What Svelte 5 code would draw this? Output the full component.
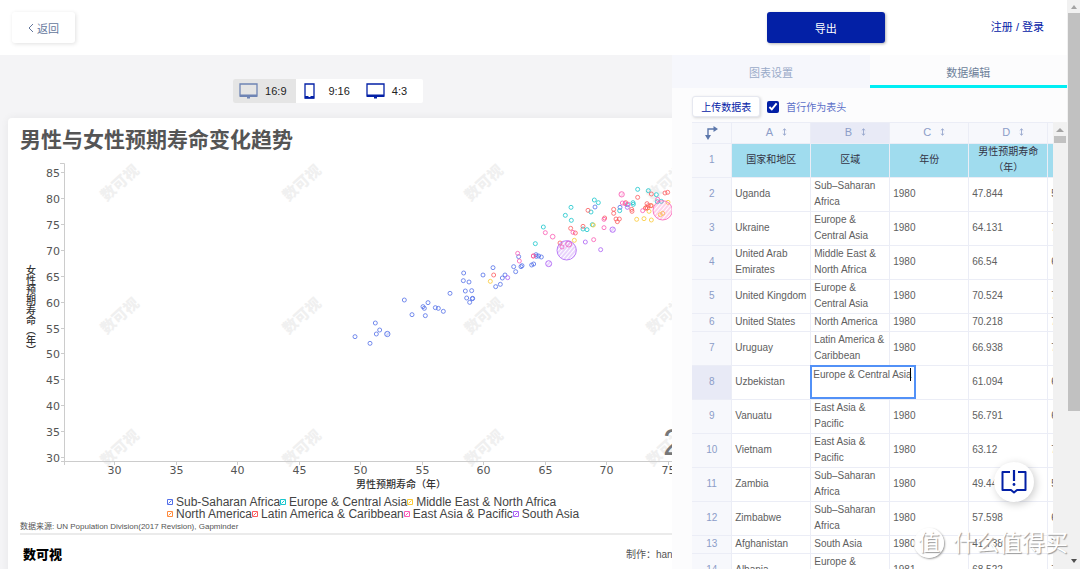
<script lang="ts">
	const ratios = [
		{ label: '16:9', icon: 'screen' },
		{ label: '9:16', icon: 'phone' },
		{ label: '4:3', icon: 'screen' }
	];
	let ratio = $state('16:9');
	let tab = $state('data');
	let firstRowHeader = $state(true);
	let editing = $state('Europe & Central Asia');

	// [x, y, radius], in thirds of a pixel
	const series = [
		{
			name: 'Sub-Saharan Africa',
			color: '#5470e8',
			points: [
				[45, 500], [90, 520], [106, 459], [119, 480], [109, 492], [142, 492, 8], [193, 390],
				[216, 434], [264, 398], [249, 410], [253, 415], [256, 437], [286, 413], [295, 415],
				[310, 424], [330, 370], [371, 309], [370, 332], [387, 336], [376, 363], [395, 362],
				[380, 384], [397, 386], [398, 385], [389, 397], [429, 315], [459, 293], [495, 315],
				[487, 324], [481, 343], [467, 350], [521, 290], [527, 305], [543, 290], [546, 287],
				[575, 285], [581, 282], [536, 260], [588, 254], [589, 259], [596, 258], [604, 261],
				[765, 111], [840, 112]
			]
		},
		{
			name: 'Europe & Central Asia',
			color: '#19c5cc',
			points: [
				[586, 221], [610, 171], [693, 112], [676, 136], [694, 151], [763, 90], [775, 98],
				[753, 126], [729, 177], [741, 179], [757, 164], [893, 58], [879, 98], [880, 103],
				[862, 104], [839, 122], [925, 62], [949, 74], [964, 94], [952, 95]
			]
		},
		{
			name: 'Middle East & North Africa',
			color: '#fbc935',
			points: [
				[451, 334], [703, 211], [760, 165], [890, 148], [912, 146], [934, 150], [927, 124],
				[968, 130], [961, 134], [984, 97]
			]
		},
		{ name: 'North America', color: '#ff8b3d', points: [[917, 114], [934, 107]] },
		{
			name: 'Latin America & Caribbean',
			color: '#fb5c5f',
			points: [
				[461, 315], [660, 219], [692, 175], [706, 189], [729, 169], [744, 121], [794, 144],
				[821, 118], [821, 130], [828, 147], [838, 147], [832, 155], [893, 82], [857, 98],
				[875, 118], [876, 124], [921, 101], [925, 107], [932, 107], [917, 114], [922, 114],
				[934, 72], [983, 67], [975, 69], [580, 258]
			]
		},
		{
			name: 'East Asia & Pacific',
			color: '#fa5cb4',
			points: [
				[533, 250], [538, 273], [616, 188], [638, 200, 7], [580, 258, 6], [666, 231],
				[686, 222, 9], [699, 187], [792, 148], [792, 173], [761, 209], [845, 73, 8],
				[847, 99], [855, 101], [865, 103], [908, 122], [953, 88], [968, 121, 29]
			]
		},
		{
			name: 'South Asia',
			color: '#ad62f5',
			points: [
				[503, 323], [626, 281, 9], [736, 216], [782, 239], [818, 179, 8], [862, 112],
				[680, 241, 29]
			]
		}
	];

	const yTicks = [85, 80, 75, 70, 65, 60, 55, 50, 45, 40, 35, 30];
	const xTicks = [30, 35, 40, 45, 50, 55, 60, 65, 70, 75];
	const xPos = (v: number) => Math.round(106 + (v - 30) * 12.3) + 0.5;
	const yPos = (v: number) => Math.round(302 - (v - 30) * 5.18) + 0.5;
	const marks = [112, 294, 476, 658].flatMap((x) => [28, 161, 293].map((y) => ({ x, y })));

	const columns = ['A', 'B', 'C', 'D', 'E'];
	const headings = ['国家和地区', '区域', '年份', '男性预期寿命（年）', '女性'];
	const rows = [
		['Uganda', 'Sub–Saharan Africa', '1980', '47.844', '54.2'],
		['Ukraine', 'Europe & Central Asia', '1980', '64.131', '74.1'],
		['United Arab Emirates', 'Middle East & North Africa', '1980', '66.54', '69.8'],
		['United Kingdom', 'Europe & Central Asia', '1980', '70.524', '76.6'],
		['United States', 'North America', '1980', '70.218', '77.5'],
		['Uruguay', 'Latin America & Caribbean', '1980', '66.938', '73.6'],
		['Uzbekistan', 'Europe & Central Asia', '1980', '61.094', '67.7'],
		['Vanuatu', 'East Asia & Pacific', '1980', '56.791', '60.1'],
		['Vietnam', 'East Asia & Pacific', '1980', '63.12', '72.1'],
		['Zambia', 'Sub–Saharan Africa', '1980', '49.447', '52.7'],
		['Zimbabwe', 'Sub–Saharan Africa', '1980', '57.598', '61.6'],
		['Afghanistan', 'South Asia', '1980', '41.738', '74.4'],
		['Albania', 'Europe & Central Asia', '1981', '68.522', '73.5']
	];
</script>

<div class="page">
	<div class="app">
		<header>
			<button class="back">
				<svg width="6" height="10" viewBox="0 0 6 10"><path d="M5 1 1 5l4 4" fill="none" stroke="currentColor" /></svg>
				返回
			</button>
			<button class="export">导出</button>
			<a class="login" href="#login">注册 / 登录</a>
		</header>

		<main>
			<section class="stage">
				<div class="ratios">
					{#each ratios as r (r.label)}
						<button class:active={ratio === r.label} onclick={() => (ratio = r.label)}>
							<svg width="19" height="16" viewBox="0 0 19 16">
								{#if r.icon === 'screen'}
									<path d="M1 1h17v12H1z" fill="none" stroke="currentColor" stroke-width="1.3" />
									<path d="M1 11.5h17V14H1zM8 14h3v1.6H8z" fill="currentColor" />
								{:else}
									<path d="M3 1h9v14H3z" fill="none" stroke="currentColor" stroke-width="1.3" />
									<path d="M3 13h3.5v1h2v-1H12v2.5H3z" fill="currentColor" />
								{/if}
							</svg>
							<span>{r.label}</span>
						</button>
					{/each}
				</div>

				<article class="card">
					<h1>男性与女性预期寿命变化趋势</h1>
					<svg class="plot" width="840" height="341" viewBox="0 0 840 341">
						<defs>
							{#each series as s, i (s.name)}
								<pattern id="hatch{i}" width="3" height="3" patternUnits="userSpaceOnUse" patternTransform="rotate(40)">
									<path d="M1 0v3" stroke={s.color} stroke-width="0.8" opacity="0.7" />
								</pattern>
							{/each}
						</defs>
						{#each marks as m}
							<text class="mark" transform="translate({m.x} {m.y}) rotate(-42)" text-anchor="middle" dy="5">数可视</text>
						{/each}
						<text class="year" x="655" y="300">2</text>
						<path class="axis" d="M52 8.5h4.5V310M53 306.5H840" />
						{#each yTicks as v}
							<path class="axis" d="M53 {yPos(v)}h3" />
							<text class="tick" x="52" y={yPos(v) + 4} text-anchor="end">{v}</text>
						{/each}
						{#each xTicks as v}
							<path class="axis" d="M{xPos(v)} 307v3" />
							<text class="tick" x={xPos(v)} y="319" text-anchor="middle">{v}</text>
						{/each}
						<text class="name vertical" x="22" y="110">女性预期寿命（年）</text>
						<text class="name" x="393" y="333" text-anchor="middle">男性预期寿命（年）</text>
						{#each series as s, i (s.name)}
							{#each s.points as [x, y, r = 6]}
								<circle
									cx={332 + x / 3}
									cy={15 + y / 3}
									r={r / 3}
									stroke={s.color}
									fill={r > 7 ? `url(#hatch${i})` : 'none'}
								/>
							{/each}
						{/each}
					</svg>

					<div class="legend">
						{#each [series.slice(0, 3), series.slice(3)] as line}
							<div class="legend-row">
								{#each line as s (s.name)}
									<span class="legend-item">
										<svg width="6" height="6" viewBox="0 0 6 6">
											<path d="M.5.5h5v5h-5zM1.5 4.5l3-3" fill="none" stroke={s.color} />
										</svg>
										{s.name}
									</span>
								{/each}
							</div>
						{/each}
					</div>
					<p class="source">数据来源: UN Population Division(2017 Revision), Gapminder</p>
					<footer>
						<span class="logo">数可视</span>
						<span class="author">制作：hanmeimei</span>
					</footer>
				</article>
			</section>

			<section class="panel">
				<nav>
					<button class:active={tab === 'chart'} onclick={() => (tab = 'chart')}>图表设置</button>
					<button class:active={tab === 'data'} onclick={() => (tab = 'data')}>数据编辑</button>
				</nav>
				<div class="tools">
					<button class="upload">上传数据表</button>
					<label>
						<input type="checkbox" bind:checked={firstRowHeader} />
						首行作为表头
					</label>
				</div>
				<div class="sheet">
					<div class="sheet-view">
						<table>
							<thead>
								<tr>
									<th class="corner">
										<svg width="14" height="14" viewBox="0 0 14 14">
											<path d="M3 9V3h6" fill="none" stroke="currentColor" stroke-width="1.4" />
											<path d="M8.5 0 13 3 8.5 6zM0 9h6l-3 5z" fill="currentColor" />
										</svg>
									</th>
									{#each columns as c (c)}
										<th class="column" class:selected={c === 'B'}>
											<span class="letter">{c}</span>
											<svg width="5" height="8" viewBox="0 0 5 8">
												<path d="M2.5 1v6M.8 2.4 2.5.8l1.7 1.6M.8 5.6l1.7 1.6 1.7-1.6" fill="none" stroke="currentColor" stroke-width="0.8" />
											</svg>
										</th>
									{/each}
								</tr>
							</thead>
							<tbody>
								<tr class="headings">
									<th>1</th>
									{#each headings as h}
										<td>{h}</td>
									{/each}
								</tr>
								{#each rows as row, i}
									<tr class:editing={i === 6}>
										<th class:selected={i === 6}>{i + 2}</th>
										{#each row as cell, j}
											<td>
												{#if i === 6 && j === 1}
													<div class="editor">
														<textarea aria-label="B8" bind:value={editing}></textarea>
														<span class="caret"></span>
													</div>
												{:else}
													{cell}
												{/if}
											</td>
										{/each}
									</tr>
								{/each}
							</tbody>
						</table>
					</div>
					<div class="bar inner">
						<svg width="8" height="5" viewBox="0 0 8 5"><path d="M0 5 4 1l4 4z" fill="#a3a3a3" /></svg>
						<div class="thumb"></div>
					</div>
				</div>
			</section>
		</main>
	</div>

	<div class="bar outer">
		<svg width="8" height="5" viewBox="0 0 8 5"><path d="M1 5 4 1l3 4z" fill="#a3a3a3" /></svg>
		<div class="thumb"></div>
		<svg class="down" width="8" height="5" viewBox="0 0 8 5"><path d="M1 0h6L4 4z" fill="#505050" /></svg>
	</div>

	<button class="help" aria-label="help">
		<svg width="26" height="24" viewBox="0 0 26 24">
			<path d="M9 2H1.5v18H10l3 2.5 3-2.5h8.5V2H17" fill="none" stroke="currentColor" stroke-width="2" stroke-linejoin="round" />
			<path d="M13 0v11" stroke="currentColor" stroke-width="2.2" />
			<circle cx="13" cy="14.5" r="1.4" fill="currentColor" />
		</svg>
	</button>

	<div class="stamp">
		<span class="seal">值</span>
		<span>什么值得买</span>
	</div>
</div>

<style>
	:global(body) {
		overflow: hidden;
	}

	.page {
		position: relative;
		display: flex;
		height: 100vh;
		overflow: hidden;
		background: #fff;
		color: #555;
		font-family: 'Liberation Sans', 'Noto Sans CJK SC', sans-serif;
		font-size: 11px;
	}

	button {
		padding: 0;
		border: 0;
		background: #fff;
		color: inherit;
		font: inherit;
		cursor: pointer;
	}

	.app {
		flex: 1;
		min-width: 0;
		display: flex;
		flex-direction: column;
	}

	header {
		flex: none;
		display: flex;
		align-items: center;
		height: 55px;
		padding: 0 23px 0 12px;
	}

	.back {
		display: flex;
		align-items: center;
		justify-content: center;
		gap: 3px;
		width: 63px;
		height: 31px;
		border-radius: 3px;
		box-shadow: 1px 1px 4px rgba(0, 0, 0, 0.12);
		color: #64779c;
	}

	.export {
		width: 118px;
		height: 31px;
		margin-left: auto;
		border-radius: 3px;
		background: #0320a6;
		box-shadow: 1px 1px 3px rgba(0, 0, 0, 0.3);
		color: #fff;
	}

	.login {
		margin: 0 0 3px 106px;
		color: #0320a6;
		text-decoration: none;
	}

	main {
		flex: 1;
		display: flex;
		min-height: 0;
	}

	.stage {
		flex: 1;
		min-width: 0;
		padding: 24px 24px 0 8px;
		overflow: hidden;
		background: #f4f4f6;
	}

	.ratios {
		display: flex;
		width: 190px;
		height: 24px;
		margin: 0 auto 15px;
		border-radius: 2px;
		overflow: hidden;
		background: #fff;
	}

	.ratios button {
		flex: 1;
		display: flex;
		align-items: center;
		gap: 7px;
		padding-left: 6px;
		background: none;
		color: #0320a6;
	}

	.ratios button.active {
		background: #e5e5e5;
		color: #6e84b4;
	}

	.ratios span {
		color: #222;
	}

	.card {
		width: 840px;
		height: 100%;
		padding-top: 7px;
		border-radius: 4px;
		background: #fff;
		box-shadow: 0 0 8px rgba(0, 0, 0, 0.06);
	}

	h1 {
		margin: 0 0 0 12px;
		color: #555;
		font-size: 21px;
		line-height: 30px;
	}

	.plot {
		display: block;
	}

	.mark {
		fill: #f0f0f0;
		font-size: 15px;
		font-weight: 900;
	}

	.year {
		fill: #777;
		font-size: 36px;
	}

	.axis {
		fill: none;
		stroke: #ccc;
	}

	.tick {
		fill: #555;
		font-family: 'DejaVu Sans', sans-serif;
		font-size: 11px;
	}

	.name {
		fill: #333;
		font-size: 10px;
		font-weight: 500;
	}

	.vertical {
		writing-mode: vertical-rl;
	}

	circle {
		stroke-opacity: 0.8;
	}

	.legend {
		padding-left: 159px;
		color: #444;
		font-size: 12px;
		line-height: 12px;
	}

	.legend-row {
		display: flex;
	}

	.legend-item {
		display: flex;
		align-items: center;
		gap: 3px;
		white-space: nowrap;
	}

	.source {
		margin: 1px 0 0 12px;
		border-bottom: 2px solid #ebebeb;
		font-size: 8px;
		line-height: 12px;
	}

	footer {
		display: flex;
		align-items: center;
		height: 36px;
		padding-left: 15px;
	}

	.logo {
		width: 603px;
		color: #000;
		font-size: 13px;
		font-weight: 900;
	}

	.author {
		font-size: 10px;
	}

	.panel {
		flex: 0 0 37%;
		display: flex;
		flex-direction: column;
		min-width: 0;
		background: #fcfcfd;
	}

	nav {
		flex: none;
		display: flex;
		height: 33px;
	}

	nav button {
		flex: 1;
		background: #f6f7fc;
		color: #9aabc8;
	}

	nav button.active {
		border-top: 3px solid #fcfcfd;
		border-bottom: 3px solid #00eef4;
		background: #fcfcfd;
		color: #6c7f99;
	}

	.tools {
		flex: none;
		display: flex;
		align-items: center;
		gap: 7px;
		padding: 8px 20px 5px;
		font-size: 10px;
	}

	.upload {
		width: 68px;
		height: 21px;
		border: 1px solid #e6e8f0;
		border-radius: 3px;
		box-shadow: 1px 1px 3px rgba(0, 0, 0, 0.15);
		color: #0320a6;
	}

	label {
		display: flex;
		align-items: center;
		gap: 7px;
		color: #5c70c8;
	}

	input {
		width: 12px;
		height: 12px;
		margin: 0;
		accent-color: #0320a6;
	}

	.sheet {
		flex: 1;
		display: flex;
		min-height: 0;
		padding-left: 20px;
	}

	.sheet-view {
		flex: 1;
		overflow: hidden;
	}

	table {
		width: 435px;
		table-layout: fixed;
		border-collapse: separate;
		border-spacing: 0;
		background: #fff;
		font-size: 10px;
		line-height: 16px;
	}

	th,
	td {
		padding: 0 3px 1px;
		border-right: 1px solid #ebedf6;
		border-bottom: 1px solid #ebedf6;
		box-sizing: border-box;
	}

	th {
		padding: 0 0 1px;
		background: #f7f8fc;
		color: #8c9dc8;
		font-weight: 400;
	}

	thead th {
		height: 22px;
		border-top: 1px solid #ebedf6;
	}

	.corner {
		width: 40px;
		color: #5c77ab;
	}

	.corner svg {
		display: block;
		margin: auto;
	}

	.column {
		padding-left: 10px;
	}

	.letter {
		margin-right: 6px;
		font-size: 11px;
	}

	.selected {
		background: #e8eaf6;
	}

	.editing {
		height: 34px;
	}

	td {
		position: relative;
		color: #606060;
	}

	.headings td {
		background: #a0dcee;
		color: #334;
		text-align: center;
	}

	.editor {
		position: absolute;
		inset: -1px auto 0 -1px;
		width: 106px;
		z-index: 1;
	}

	textarea {
		width: 100%;
		height: 100%;
		padding: 0 1px;
		border: 2px solid #5291f7;
		box-sizing: border-box;
		outline: 0;
		resize: none;
		overflow: hidden;
		background: #fff;
		color: #606060;
		font: inherit;
		white-space: nowrap;
	}

	.caret {
		position: absolute;
		top: 3px;
		right: 5px;
		width: 1px;
		height: 13px;
		background: #000;
	}

	.bar {
		flex: none;
		display: flex;
		flex-direction: column;
		align-items: center;
		box-sizing: border-box;
		background: #f1f1f1;
	}

	.thumb {
		width: 12px;
		background: #c1c1c1;
	}

	.inner {
		width: 14px;
		padding-top: 5px;
		gap: 4px;
	}

	.inner .thumb {
		height: 7px;
	}

	.outer {
		width: 13px;
		padding: 4px 0 5px;
		gap: 4px;
	}

	.outer .thumb {
		height: 71%;
	}

	.down {
		margin-top: auto;
	}

	.help {
		position: absolute;
		right: 46px;
		bottom: 67px;
		display: flex;
		align-items: center;
		justify-content: center;
		width: 40px;
		height: 40px;
		border-radius: 50%;
		box-shadow: 2px 2px 8px rgba(0, 0, 0, 0.2);
		color: #0320a6;
		z-index: 2;
	}

	.stamp {
		position: absolute;
		right: 12px;
		bottom: 9px;
		display: flex;
		align-items: center;
		gap: 9px;
		color: #fff;
		font-size: 23px;
		line-height: 34px;
		text-shadow: 1px 1px 1px #999;
		z-index: 3;
	}

	.seal {
		width: 30px;
		height: 30px;
		border-radius: 50%;
		background: rgba(255, 255, 255, 0.8);
		box-shadow: 1px 1px 2px #999;
		font-size: 22px;
		line-height: 30px;
		text-align: center;
	}
</style>
